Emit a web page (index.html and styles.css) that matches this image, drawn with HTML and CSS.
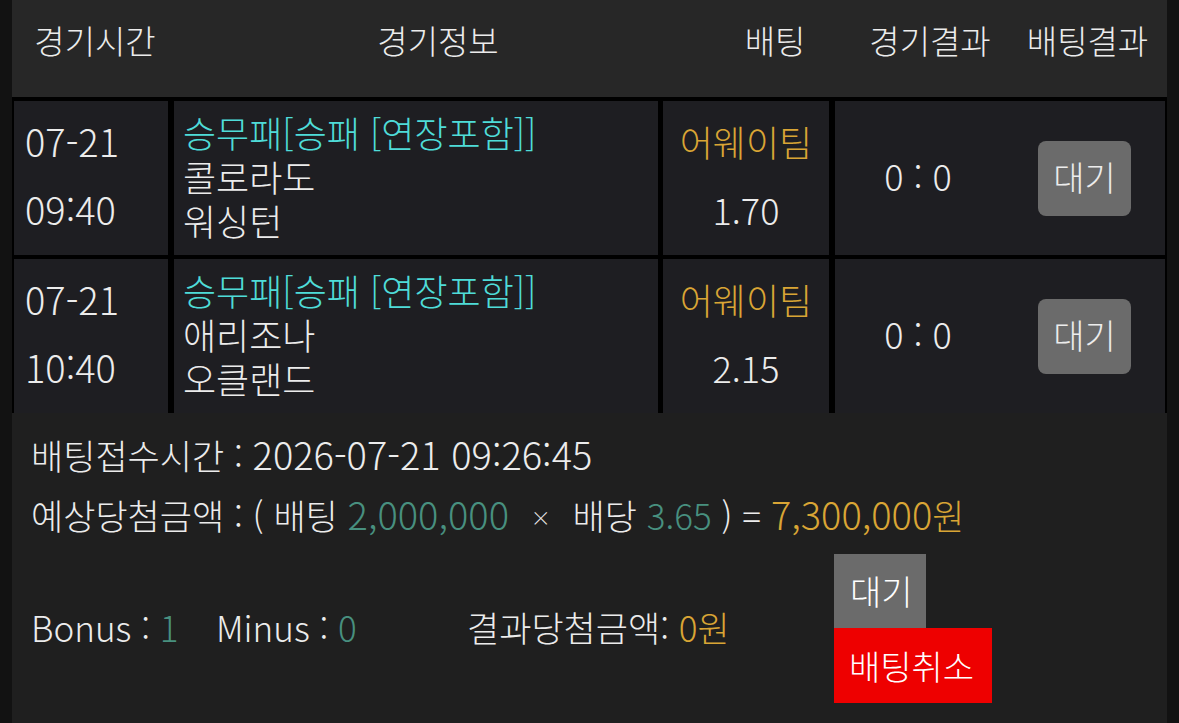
FILE: index.html
```html
<!DOCTYPE html>
<html lang="ko">
<head>
    <meta charset="UTF-8">
    <meta name="viewport" content="width=device-width, initial-scale=1.0">
    <title>배팅내역</title>
    <link rel="stylesheet" href="styles.css">
</head>
<body>
    <div class="panel">
        <div class="head">
            <div>경기시간</div>
            <div>경기정보</div>
            <div>배팅</div>
            <div>경기결과</div>
            <div>배팅결과</div>
        </div>

        <div class="list">
            <div class="row">
                <div class="cell time">
                    <span>07-21</span>
                    <span>09:40</span>
                </div>
                <div class="cell info">
                    <span class="market">승무패[승패 [연장포함]]</span>
                    <span>콜로라도</span>
                    <span>워싱턴</span>
                </div>
                <div class="cell pick">
                    <span class="gold">어웨이팀</span>
                    <span>1.70</span>
                </div>
                <div class="cell result">
                    <span class="score">0 : 0</span>
                    <span class="state">대기</span>
                </div>
            </div>

            <div class="row">
                <div class="cell time">
                    <span>07-21</span>
                    <span>10:40</span>
                </div>
                <div class="cell info">
                    <span class="market">승무패[승패 [연장포함]]</span>
                    <span>애리조나</span>
                    <span>오클랜드</span>
                </div>
                <div class="cell pick">
                    <span class="gold">어웨이팀</span>
                    <span>2.15</span>
                </div>
                <div class="cell result">
                    <span class="score">0 : 0</span>
                    <span class="state">대기</span>
                </div>
            </div>
        </div>

        <div class="summary">
            <p class="line">배팅접수시간 : <span class="num">2026-07-21 09:26:45</span></p>
            <p class="line">예상당첨금액 : ( 배팅 <span class="num teal">2,000,000</span> <span class="times">×</span> 배당 <span class="teal">3.65</span> ) = <span class="gold"><span class="num">7,300,000</span>원</span></p>
            <div class="bottom">
                <span class="bonus">Bonus : <span class="teal">1</span></span>
                <span class="minus">Minus : <span class="teal">0</span></span>
                <span class="win">결과당첨금액: <span class="gold">0원</span></span>
                <div class="actions">
                    <button class="wait">대기</button>
                    <button class="cancel">배팅취소</button>
                </div>
            </div>
        </div>
    </div>
</body>
</html>
```

FILE: styles.css
```css
body {
    margin: 0;
    background: #121212;
    font-family: 'Noto Sans CJK KR', 'Noto Sans', sans-serif;
    font-weight: 300;
    color: #ececec;
}

.panel {
    margin: 0 12px;
    height: 723px;
    background: #1f1f1f;
}

.head {
    display: grid;
    grid-template-columns: 166px 520px 154px 156px 159px;
    height: 97px;
    background: #272727;
    font-size: 33px;
}

.head div {
    display: flex;
    align-items: center;
    justify-content: center;
    padding-bottom: 18px;
}

.list {
    display: grid;
    gap: 4px;
    padding: 4px 2px 0;
    background: #000;
}

.row {
    display: grid;
    grid-template-columns: 154px 483px 166px 1fr;
    column-gap: 6px;
    height: 154px;
}

.row .info {
    margin-right: -1px;
}

.cell {
    background: #1e1e22;
    font-size: 36px;
}

.time, .pick {
    display: flex;
    flex-direction: column;
    justify-content: center;
    gap: 28px;
    line-height: 40px;
    padding-bottom: 6px;
}

.time {
    padding-left: 11px;
    font-size: 38px;
}

.pick {
    align-items: center;
}

.info {
    display: flex;
    flex-direction: column;
    justify-content: center;
    padding: 0 0 4px 9px;
    line-height: 44px;
}

.market {
    color: #4fdcd8;
}

.gold {
    color: #d9a535;
}

.teal {
    color: #48907f;
}

.result {
    display: flex;
    align-items: center;
}

.score {
    width: 166px;
    margin-bottom: 6px;
    text-align: center;
}

.state {
    margin-left: 37px;
    width: 93px;
    height: 75px;
    line-height: 72px;
    text-align: center;
    background: #6b6b6b;
    border-radius: 8px;
    font-size: 34px;
}

.summary {
    padding: 11px 19px 0;
    font-size: 35px;
}

.num {
    font-size: 38px;
}

.line {
    margin: 0;
    line-height: 59px;
}

.times {
    font-size: 20px;
    margin: 0 12px;
    vertical-align: 4px;
}

.bottom {
    display: flex;
    align-items: center;
    margin-top: 7px;
}

.bottom > span {
    margin-bottom: 4px;
}

.bonus {
    width: 185px;
}

.minus {
    width: 251px;
}

.win {
    width: 367px;
}

.actions {
    display: flex;
    flex-direction: column;
    align-items: flex-start;
}

button {
    height: 74px;
    border: none;
    font-family: inherit;
    font-weight: 300;
    font-size: 34px;
    color: #fff;
    text-align: left;
    white-space: nowrap;
    padding: 0 0 0 16px;
}

.wait {
    width: 92px;
    background: #6b6b6b;
    line-height: 74px;
}

.cancel {
    width: 158px;
    height: 75px;
    background: #ee0000;
    padding-left: 15px;
}
```
